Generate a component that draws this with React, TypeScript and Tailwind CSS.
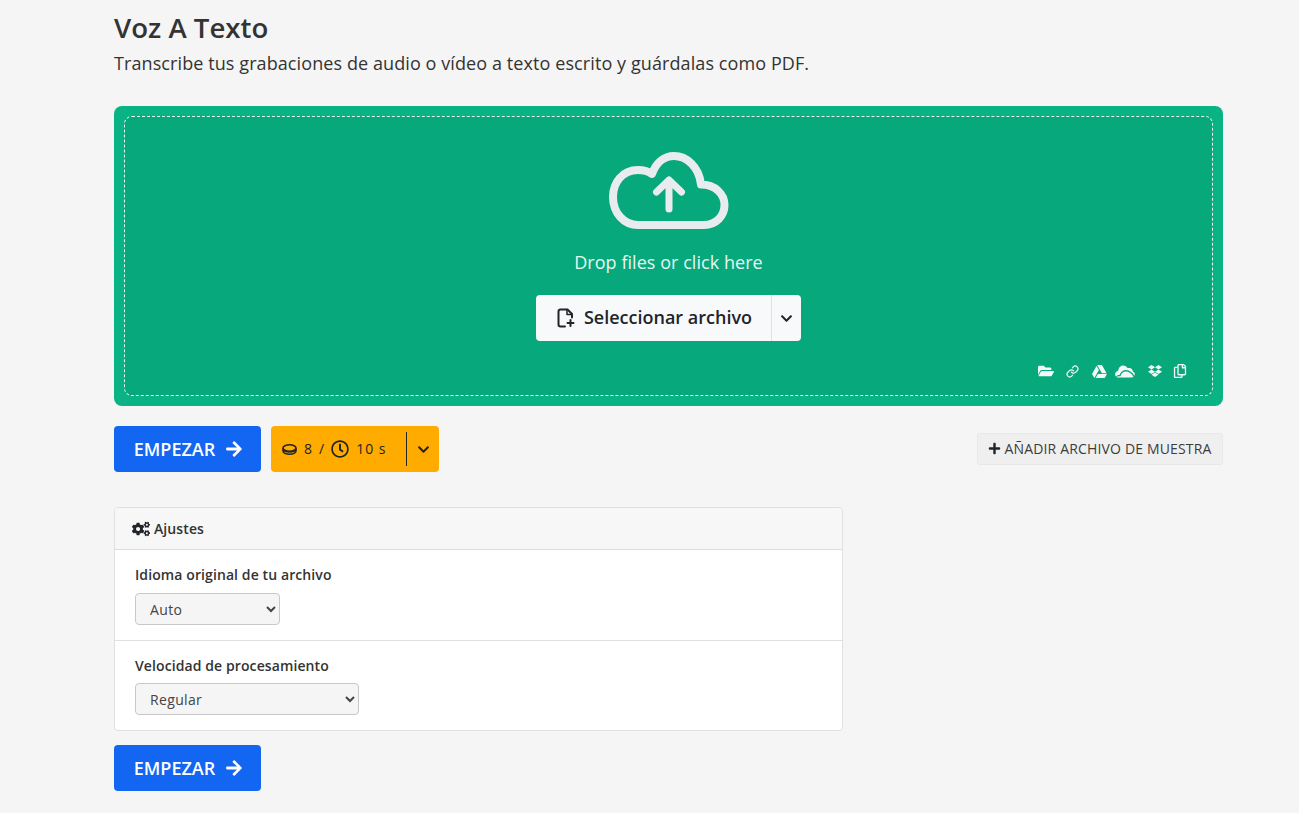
import { FaArrowRight, FaChevronDown, FaCogs, FaDropbox, FaFolderOpen, FaGoogleDrive, FaPlus, FaRegClock, FaRegCopy } from 'react-icons/fa';
import { Link } from 'lucide-react';

function StartButton() {
  return (
    <button className="flex h-[46px] w-[147px] items-center justify-center gap-[10px] rounded-[4px] bg-[#1266f1] pl-[2px] text-[18px] font-semibold text-white">
      EMPEZAR
      <FaArrowRight className="text-[18px]" />
    </button>
  );
}

function CloudUpload() {
  return (
    <svg width="122" height="80" viewBox="0 0 122 80" fill="none" stroke="#e9ecef" strokeLinecap="round" strokeLinejoin="round">
      <path
        strokeWidth="8"
        d="M30 74H96C108 74 116.500 65 116.500 54C116.500 43 107 33.500 93 33.500C91 15 78 5 66 5C56 5 48 12 44 23C40 20 36 19 30 19C14 19 5 32 5 46C5 62 16 74 30 74Z"
      />
      <path strokeWidth="7" d="M61 58V30M48.500 41L61 29L73.500 41" />
    </svg>
  );
}

function FilePlusIcon() {
  return (
    <svg width="18" height="20" viewBox="0 0 18 20" fill="none" stroke="#212529" strokeWidth="2" strokeLinecap="round" strokeLinejoin="round">
      <path d="M8 18.500H3.500C2.500 18.500 1.500 17.500 1.500 16.500V3.500C1.500 2.500 2.500 1.500 3.500 1.500H10.500L15 6V9.500" />
      <path d="M10 1.500V6.500H15" strokeWidth="1.500" />
      <path d="M13.500 12V18M10.500 15H16.500" />
    </svg>
  );
}

function CoinIcon() {
  return (
    <svg width="15" height="11" viewBox="0 0 15 11" fill="none" stroke="#212529" strokeWidth="1.500">
      <ellipse cx="7.500" cy="4" rx="6.500" ry="3.200" />
      <path d="M1 4V7C1 8.800 4 10.200 7.500 10.200C11 10.200 14 8.800 14 7V4" />
      <path d="M1 6C2 7.800 4.500 8 7.500 8C10.500 8 13 7.800 14 6" />
    </svg>
  );
}

function OneDriveIcon() {
  return (
    <svg width="20" height="13" viewBox="0 0 20 13" fill="currentColor">
      <path d="M8 .5C10 .5 11.800 1.500 12.700 3.200C13.500 2.900 14.300 2.900 15 3.100C16.600 3.600 17.700 5 17.900 6.600C19 7 19.800 8 19.800 9.300C19.800 9.800 19.700 10.300 19.500 10.700C17.500 7.500 14.500 5 11 5C8 5 5.500 7 4.500 10C3 9.800 1.800 10.500 1 11.700C.4 11 .1 10.200 .1 9.300C.1 7.500 1.500 6 3.200 5.800C3.500 2.900 5.500 .5 8 .5Z" />
      <path d="M11 6.500C14 6.500 17 9 18.500 11.800C18 12.300 17.300 12.500 16.500 12.500H3C2.500 12.500 2.100 12.400 1.700 12.200C2.300 11.300 3.500 11 5.500 11.300C6 8.500 8.300 6.500 11 6.500Z" />
    </svg>
  );
}

export default function App() {
  return (
    <div className="min-h-[813px] bg-[#f5f5f5] pl-[114px] pr-[76px] pt-[10px] font-['Open_Sans','Noto_Sans',sans-serif] text-[#333]">
      <h1 className="text-[27.6px] leading-[34px] font-semibold text-[#333]">Voz A Texto</h1>
      <p className="mt-[6px] text-[18px] leading-[27px] tracking-[0.09px] text-[#333]">
        Transcribe tus grabaciones de audio o vídeo a texto escrito y guárdalas como PDF.
      </p>

      <div className="mt-[29px] h-[300px] rounded-[8px] bg-[#0ab383] p-[10px]">
        <div className="relative flex h-[280px] flex-col items-center rounded-[8px] border border-dashed border-[#e9f5f1] bg-[#07a87c] pt-[34px]">
          <CloudUpload />
          <div className="mt-[18px] text-[18px] leading-[27px] tracking-[0.05px] text-[#e6f7f1]">Drop files or click here</div>
          <div className="mt-[19px] flex h-[46px] w-[265px] rounded-[4px] bg-[#f8f9fa] text-[#212529]">
            <div className="flex w-[236px] items-center justify-center gap-[9px] border-r border-[#dee2e6] pb-[1px] pl-[2px] text-[18px] font-semibold">
              <FilePlusIcon />
              Seleccionar archivo
            </div>
            <div className="flex flex-1 items-center justify-center">
              <FaChevronDown className="text-[13px]" />
            </div>
          </div>
          <div className="absolute bottom-[16px] right-[25px] flex items-center gap-[13px] text-[#f1f8f5]">
            <FaFolderOpen className="text-[16px]" />
            <Link size={13} strokeWidth={2.2} className="-ml-[1px]" />
            <FaGoogleDrive className="text-[15px]" />
            <div className="-ml-[5px]">
              <OneDriveIcon />
            </div>
            <FaDropbox className="text-[14px]" />
            <FaRegCopy className="-ml-[2px] text-[14px]" />
          </div>
        </div>
      </div>

      <div className="mt-[20px] flex items-center">
        <StartButton />
        <div className="ml-[10px] flex h-[46px] w-[168px] items-center rounded-[4px] bg-[#ffab00] pl-[11px] text-[14px] text-[#212529]">
          <CoinIcon />
          <span className="ml-[7px] pb-[1px]">8</span>
          <span className="ml-[7px] pb-[1px]">/</span>
          <FaRegClock className="ml-[7px] text-[18px]" />
          <span className="ml-[7px] pb-[1px] tracking-[1px]">10 s</span>
          <div className="ml-[20px] h-[34px] w-px bg-[#212529]" />
          <FaChevronDown className="ml-[10px] text-[13px]" />
        </div>
        <button className="ml-auto flex h-[32px] w-[246px] items-center justify-center gap-[3px] rounded-[3px] border border-[#e8e8e8] bg-[#efefef] pb-[1px] text-[14px] tracking-[0.16px] text-[#3c3c3c]">
          <FaPlus className="text-[13px] text-[#212529]" />
          AÑADIR ARCHIVO DE MUESTRA
        </button>
      </div>

      <div className="mt-[35px] w-[729px] overflow-hidden rounded-[4px] border border-[#e0e0e0] bg-white">
        <div className="flex h-[42px] items-center gap-[4px] border-b border-[#dcdcdc] bg-[#f7f7f7] pl-[17px] text-[14px] font-semibold tracking-[0.1px] text-[#333]">
          <FaCogs className="text-[18px] text-[#212529]" />
          Ajustes
        </div>
        <div className="h-[91px] border-b border-[#e0e0e0] px-[20px] pt-[14px]">
          <label className="block text-[14px] leading-[21px] font-semibold tracking-[0.1px] text-[#333]">Idioma original de tu archivo</label>
          <select className="mt-[8px] block h-[32px] w-[145px] rounded-[4px] border border-[#c8c8c8] bg-[#f5f5f5] pl-[10px] text-[14px] tracking-[0.35px] text-[#444]">
            <option>Auto</option>
          </select>
        </div>
        <div className="h-[89px] px-[20px] pt-[14px]">
          <label className="block text-[14px] leading-[21px] font-semibold tracking-[0.1px] text-[#333]">Velocidad de procesamiento</label>
          <select className="mt-[7px] block h-[32px] w-[224px] rounded-[4px] border border-[#c8c8c8] bg-[#f5f5f5] pl-[10px] text-[14px] tracking-[0.35px] text-[#444]">
            <option>Regular</option>
          </select>
        </div>
      </div>

      <div className="mt-[14px]">
        <StartButton />
      </div>
    </div>
  );
}
